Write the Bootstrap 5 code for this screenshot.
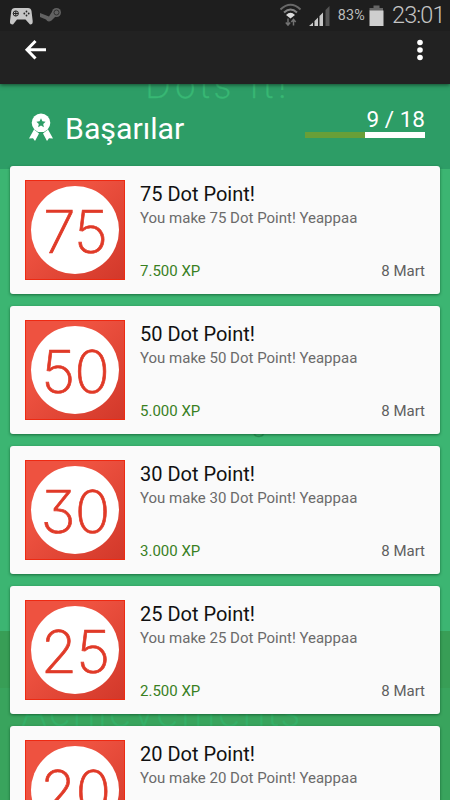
<!DOCTYPE html>
<html lang="tr">
<head>
<meta charset="utf-8">
<meta name="viewport" content="width=device-width, initial-scale=1">
<title>Başarılar</title>
<link href="https://cdn.jsdelivr.net/npm/bootstrap@5.3.0/dist/css/bootstrap.min.css" rel="stylesheet">
<style>
body{font-family:Roboto,"Liberation Sans",sans-serif;background:#3cb572;height:800px}
.screen{width:450px;height:800px}
.top-area{height:84px;background:#222;box-shadow:0 1px 4px rgba(0,0,0,.55);z-index:3}
.status{height:31px;background:#1e1e1e;color:#bcbcbc;padding-right:6px}
.pct{font-size:14.3px;line-height:31px;letter-spacing:.2px}
.clock{font-size:23.5px;line-height:31px;font-weight:300;color:#c4c4c4;letter-spacing:-.9px;margin-left:8px;width:52px}
.toolbar{height:53px}
.backdrop{inset:0;z-index:0}
.band-a{height:169px;background:#2d9d66}
.band-b{height:462px;background:#3cb572}
.band-c{height:57px;background:#389e56}
.band-d{height:112px;background:#39a45d}
.ghost{font-family:Inter,sans-serif;font-weight:200;line-height:1;white-space:nowrap;color:#38b874;-webkit-text-stroke:.4px currentColor}
.ghost-1{left:145px;top:67px;font-size:36px;letter-spacing:4px}
.ghost-2{left:252px;top:412px;font-size:24px;color:#279153}
.ghost-3{left:21px;top:692px;font-size:40px;letter-spacing:1.9px;color:#35b068}
.heading{height:81.5px;padding:0 25px 0 28px;z-index:1}
.page-title{font-size:30.3px;line-height:36px;color:#fff;margin:27px 0 0 11px}
.count{font-size:22.5px;line-height:24px;color:#fff;margin-top:22.5px}
.meter{width:120px;height:5.5px;background:#fff;margin-top:1.500px}
.meter .progress-bar{background:#689f38}
.list{gap:12px;padding:0 10px;z-index:1}
.achievement{height:128px;background:#fafafa;border-radius:3px;padding:14.5px 15px 13px;box-shadow:0 1px 3px rgba(0,60,25,.6)}
.emblem{width:100px;height:100px;background:linear-gradient(135deg,#ee5240 35%,#d2382a);border:1px solid #ee2a12}
.disc{width:88px;height:88px;background:#fff;color:#e03a28;font:200 59px/91px Inter,sans-serif;letter-spacing:-1px;white-space:nowrap;font-feature-settings:"cv09";-webkit-text-stroke:.7px #e03a28;border-radius:50%}
.info{margin-left:15px}
.name{font-size:20px;line-height:24px;color:#111;margin-top:2px}
.note{font-size:15px;line-height:20px;color:#6b6b6b;margin-top:1.5px}
.foot{font-size:15px;line-height:20px;color:#5f5f5f}
.xp{color:#39801f}
</style>
</head>
<body>
<main class="screen position-relative overflow-hidden">
  <div class="backdrop position-absolute" aria-hidden="true">
    <div class="band-a"></div><div class="band-b"></div><div class="band-c"></div><div class="band-d"></div>
    <span class="ghost ghost-1 position-absolute">Dots It!</span>
    <span class="ghost ghost-2 position-absolute">g</span>
    <span class="ghost ghost-3 position-absolute">Achievements</span>
  </div>
  <header class="top-area position-relative">
    <div class="status d-flex align-items-center">
      <svg width="72" height="31" viewBox="0 0 72 31">
        <path d="M15 8H28Q31 8 31.500 11L32.700 21Q33 24.600 30 24.500L25.500 19.500H17L13 24.500Q9.500 24.600 10 21L11.300 11Q11.800 8 15 8Z" fill="#c6c6c6"/>
        <circle cx="15.800" cy="13.500" r="2.600" fill="none" stroke="#222" stroke-width="1"/><path d="M15.800 11v5M13.300 13.500h5" stroke="#222"/>
        <g fill="#222"><circle cx="26.500" cy="11.500" r=".9"/><circle cx="26.500" cy="15.500" r=".9"/><circle cx="24.300" cy="13.500" r=".9"/><circle cx="28.700" cy="13.500" r=".9"/></g>
        <path d="M40 13L49 16.500L52.500 11L57 15L51.500 20.500Q48 23 46 19.500L40 17Z" fill="#626262"/>
        <circle cx="56.500" cy="12.500" r="4.500" fill="#626262"/><circle cx="56.500" cy="12.500" r="2.500" fill="none" stroke="#303030"/>
      </svg>
      <svg class="ms-auto" width="58" height="31" viewBox="0 0 58 31">
        <g fill="none" stroke="#686868" stroke-width="2"><path d="M.5 9.500Q10.500 0 20.500 9.500"/><path d="M4 12.500Q10.500 6.500 17 12.500" stroke="#858585"/></g>
        <path d="M6 15Q10.500 10.500 15 15L10.500 18.500Z" fill="#ddd"/><path d="M8 18.500v7M5.800 22.500L8 25L10.200 22.500M13.500 25.500V19.500M11.300 22L13.500 19.500L15.700 22" fill="none" stroke="#727272" stroke-width="1.500"/>
        <path d="M29 26L33 22.500V26ZM34.500 26V21L38 17.500V26ZM39.500 26V16L43 12.500V26Z" fill="#c9c9c9"/><path d="M45.500 26V10L49.500 6V26Z" fill="#555"/>
      </svg>
      <span class="pct">83%</span>
      <svg class="ms-1" width="15" height="31" viewBox="0 0 15 31"><path d="M4.500 5.500h6v2.500h3.500v3H.5V8h4z" fill="#666"/><path d="M.5 10.500h14v15.500H.5z" fill="#cecece"/></svg>
      <span class="clock">23:01</span>
    </div>
    <div class="toolbar d-flex justify-content-between">
      <svg width="60" height="40" viewBox="0 31 60 40"><path d="M46 49.700H28M35.500 41L27 49.700L35.500 58.500" fill="none" stroke="#fff" stroke-width="3"/></svg>
      <svg width="45" height="40" viewBox="405 31 45 40" fill="#fff"><circle cx="420" cy="42.500" r="2.800"/><circle cx="420" cy="50" r="2.800"/><circle cx="420" cy="57.500" r="2.800"/></svg>
    </div>
  </header>
  <section class="heading position-relative d-flex">
    <svg width="26" height="60" viewBox="28 84 26 60" fill="#fff">
      <path d="M34 129.500L29 138.500L33 138.300L35 141L39 133.500ZM48 129.500L53 138.500L49 138.300L47 141L43 133.500Z"/><circle cx="41" cy="122.800" r="9.300"/>
      <path d="M41 118.300l1.400 3 3.200.4-2.400 2.200.7 3.300-2.900-1.700-2.900 1.700.7-3.300-2.400-2.200 3.200-.4z" fill="#2d9d66"/>
    </svg>
    <h1 class="page-title fw-normal">Başarılar</h1>
    <div class="ms-auto d-flex flex-column align-items-end">
      <div class="count">9 / 18</div>
      <div class="meter d-flex"><div class="progress-bar w-50"></div></div>
    </div>
  </section>
  <section class="list d-flex flex-column position-relative">
    <article class="achievement d-flex flex-shrink-0"><div class="emblem d-flex align-items-center justify-content-center flex-shrink-0"><div class="disc text-center">75</div></div><div class="info d-flex flex-column flex-grow-1"><h2 class="name fw-normal mb-0">75 Dot Point!</h2><p class="note mb-0">You make 75 Dot Point! Yeappaa</p><div class="foot d-flex justify-content-between mt-auto"><span class="xp">7.500 XP</span><span>8 Mart</span></div></div></article>
    <article class="achievement d-flex flex-shrink-0"><div class="emblem d-flex align-items-center justify-content-center flex-shrink-0"><div class="disc text-center">50</div></div><div class="info d-flex flex-column flex-grow-1"><h2 class="name fw-normal mb-0">50 Dot Point!</h2><p class="note mb-0">You make 50 Dot Point! Yeappaa</p><div class="foot d-flex justify-content-between mt-auto"><span class="xp">5.000 XP</span><span>8 Mart</span></div></div></article>
    <article class="achievement d-flex flex-shrink-0"><div class="emblem d-flex align-items-center justify-content-center flex-shrink-0"><div class="disc text-center">30</div></div><div class="info d-flex flex-column flex-grow-1"><h2 class="name fw-normal mb-0">30 Dot Point!</h2><p class="note mb-0">You make 30 Dot Point! Yeappaa</p><div class="foot d-flex justify-content-between mt-auto"><span class="xp">3.000 XP</span><span>8 Mart</span></div></div></article>
    <article class="achievement d-flex flex-shrink-0"><div class="emblem d-flex align-items-center justify-content-center flex-shrink-0"><div class="disc text-center">25</div></div><div class="info d-flex flex-column flex-grow-1"><h2 class="name fw-normal mb-0">25 Dot Point!</h2><p class="note mb-0">You make 25 Dot Point! Yeappaa</p><div class="foot d-flex justify-content-between mt-auto"><span class="xp">2.500 XP</span><span>8 Mart</span></div></div></article>
    <article class="achievement d-flex flex-shrink-0"><div class="emblem d-flex align-items-center justify-content-center flex-shrink-0"><div class="disc text-center">20</div></div><div class="info d-flex flex-column flex-grow-1"><h2 class="name fw-normal mb-0">20 Dot Point!</h2><p class="note mb-0">You make 20 Dot Point! Yeappaa</p></div></article>
  </section>
</main>
<script src="https://cdn.jsdelivr.net/npm/bootstrap@5.3.0/dist/js/bootstrap.bundle.min.js"></script>
</body>
</html>
